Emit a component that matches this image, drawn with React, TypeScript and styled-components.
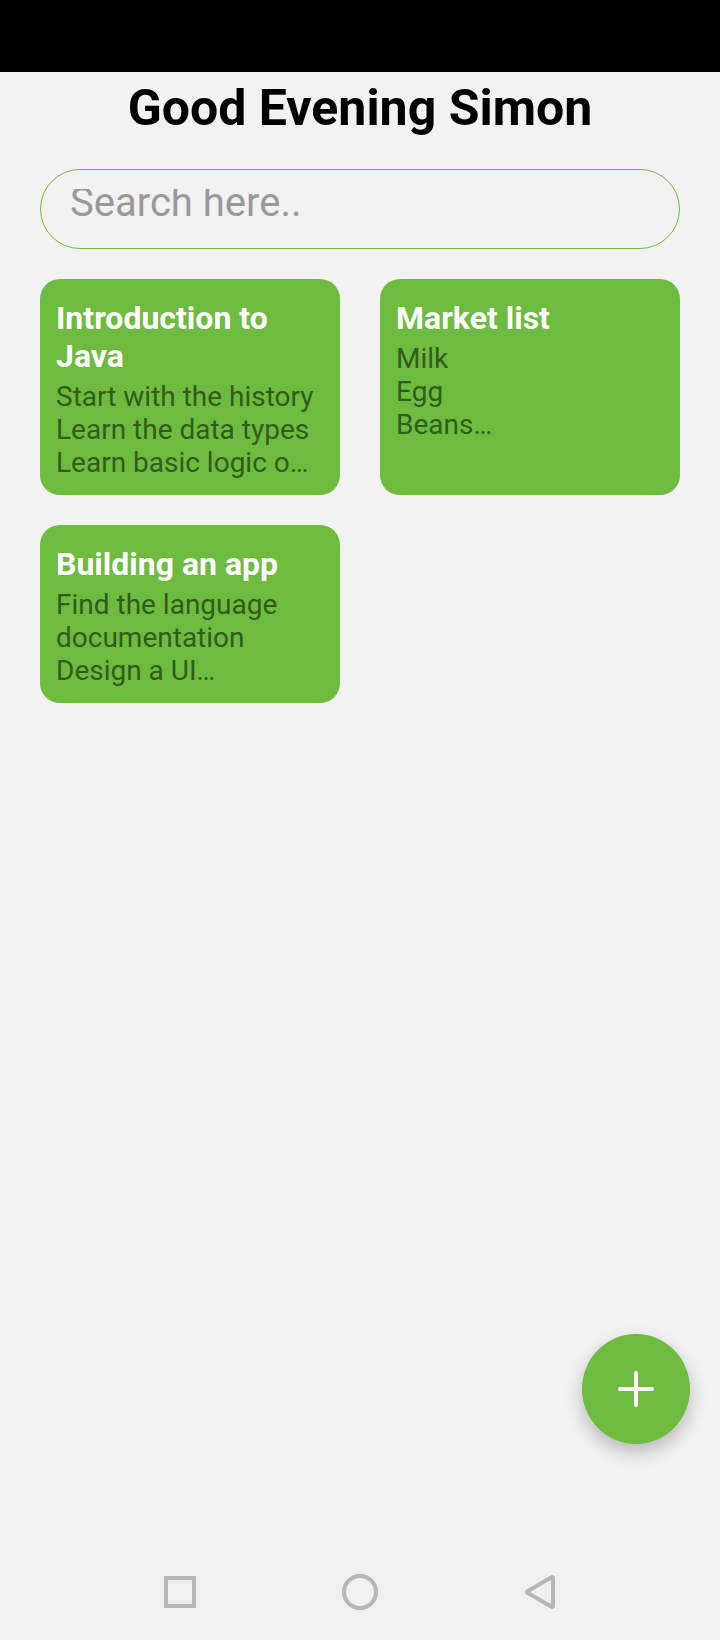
import React, { useState } from "react";
import styled, { createGlobalStyle } from "styled-components";

const green = "#6dbb3f";

const GlobalStyle = createGlobalStyle`
  *, *::before, *::after {
    box-sizing: border-box;
  }

  body {
    margin: 0;
    background: #f2f2f2;
    font-family: Roboto, "Liberation Sans", sans-serif;
  }

  button {
    border: 0;
    padding: 0;
    background: none;
    cursor: pointer;
  }
`;

const Screen = styled.div`
  display: flex;
  flex-direction: column;
  min-height: 100vh;
`;

const StatusBar = styled.div`
  height: 72px;
  background: #000;
`;

const Main = styled.main`
  flex: 1;
  padding: 6px 40px 30px;
`;

const Greeting = styled.h1`
  margin: 0 0 31px;
  color: #000;
  font-size: 50px;
  line-height: 60px;
  font-weight: 700;
  text-align: center;
`;

const SearchBox = styled.label`
  display: block;
  margin-bottom: 30px;
  padding: 19px 29px;
  border: 1px solid ${green};
  border-radius: 40px;
`;

const SearchField = styled.span`
  display: flex;
  align-items: flex-end;
  height: 40px;
  overflow: hidden;
`;

const SearchInput = styled.input`
  flex: 1;
  min-width: 0;
  height: 54px;
  padding: 0;
  border: 0;
  outline: 0;
  background: transparent;
  color: #222;
  font-family: inherit;
  font-size: 40px;

  &::placeholder {
    color: #999;
    opacity: 1;
  }
`;

const NoteGrid = styled.section`
  display: grid;
  grid-template-columns: 1fr 1fr;
  gap: 30px 40px;
`;

const NoteCard = styled.article`
  padding: 20px 16px 16px;
  border-radius: 20px;
  background: ${green};
`;

const NoteTitle = styled.h2`
  margin: 0 0 5px;
  color: #fff;
  font-size: 32px;
  line-height: 38px;
  font-weight: 700;
`;

const NoteText = styled.p`
  margin: 0;
  color: #335c1b;
  font-size: 28px;
  line-height: 33px;
  white-space: pre-line;
`;

const AddButton = styled.button`
  position: fixed;
  right: 30px;
  bottom: 196px;
  display: flex;
  align-items: center;
  justify-content: center;
  width: 108px;
  height: 110px;
  border-radius: 50%;
  background: ${green};
  box-shadow: 0 8px 18px rgba(0, 0, 0, 0.24);
`;

const NavBar = styled.nav`
  display: flex;
  justify-content: space-around;
  height: 96px;
  padding: 0 12.5%;
  background: #f0f0f0;
`;

const NavButton = styled.button`
  display: flex;
  align-items: center;
  justify-content: center;
  width: 96px;
`;

const NavIcon = styled.svg`
  width: 48px;
  height: 48px;
  fill: none;
  stroke: #b6b6b6;
  stroke-width: 4;
`;

const notes = [
  {
    title: "Introduction to Java",
    text: "Start with the history\nLearn the data types\nLearn basic logic o…",
  },
  { title: "Market list", text: "Milk\nEgg\nBeans…" },
  {
    title: "Building an app",
    text: "Find the language documentation\nDesign a UI…",
  },
];

export default function App() {
  const [query, setQuery] = useState("");
  const shown = notes.filter((note) =>
    note.title.toLowerCase().includes(query.toLowerCase())
  );

  return (
    <>
      <GlobalStyle />
      <Screen>
        <StatusBar />
        <Main>
          <Greeting>Good Evening Simon</Greeting>
          <SearchBox>
            <SearchField>
              <SearchInput
                type="text"
                aria-label="Search notes"
                placeholder="Search here.."
                value={query}
                onChange={(event) => setQuery(event.target.value)}
              />
            </SearchField>
          </SearchBox>
          <NoteGrid>
            {shown.map((note) => (
              <NoteCard key={note.title}>
                <NoteTitle>{note.title}</NoteTitle>
                <NoteText>{note.text}</NoteText>
              </NoteCard>
            ))}
          </NoteGrid>
        </Main>
        <AddButton type="button" aria-label="Add note">
          <svg
            width="36"
            height="36"
            viewBox="0 0 36 36"
            fill="none"
            stroke="#fff"
            strokeWidth="4"
            strokeLinecap="round"
          >
            <path d="M18 2v32M2 18h32" />
          </svg>
        </AddButton>
        <NavBar>
          <NavButton type="button" aria-label="Recent apps">
            <NavIcon viewBox="0 0 48 48">
              <rect x="10" y="10" width="28" height="28" />
            </NavIcon>
          </NavButton>
          <NavButton type="button" aria-label="Home">
            <NavIcon viewBox="0 0 48 48">
              <circle cx="24" cy="24" r="16" />
            </NavIcon>
          </NavButton>
          <NavButton type="button" aria-label="Back">
            <NavIcon viewBox="0 0 48 48">
              <path
                d="M37 9v30h-1L11 24.500v-1L36 9z"
                strokeLinejoin="bevel"
              />
            </NavIcon>
          </NavButton>
        </NavBar>
      </Screen>
    </>
  );
}
